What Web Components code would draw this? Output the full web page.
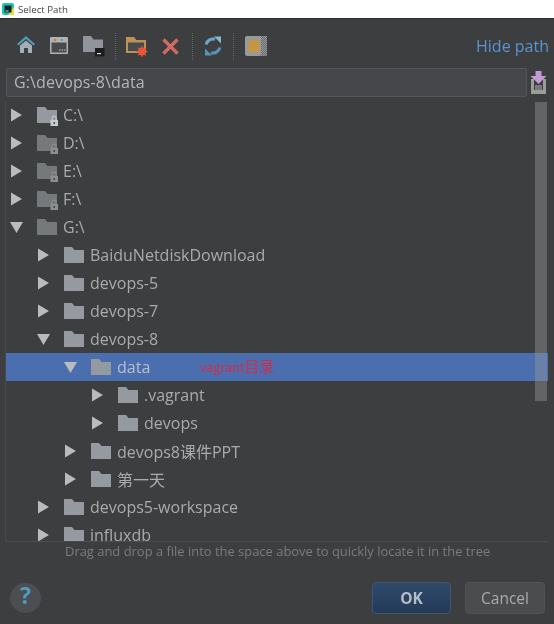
<!DOCTYPE html>
<html>
<head>
<meta charset="utf-8">
<title>Select Path</title>
<style>
  html, body { margin: 0; padding: 0; background: #3d3e40; }
  body { width: 554px; height: 624px; overflow: hidden; font-family: "Open Sans", "Noto Sans CJK SC", sans-serif; }
  .note { color: #d42a48; font-size: 14.6px; font-family: "Noto Sans CJK SC", sans-serif; line-height: 22px; }
  .note .small { font-size: 12.6px; }
</style>
</head>
<body>
<select-path-dialog>
  <title-bar slot="title">Select Path</title-bar>
  <tree-view slot="tree">
    <tree-row depth="0" kind="locked">C:\</tree-row>
    <tree-row depth="0" kind="locked-dim">D:\</tree-row>
    <tree-row depth="0" kind="locked-dim">E:\</tree-row>
    <tree-row depth="0" kind="locked-dim">F:\</tree-row>
    <tree-row depth="0" kind="folder-dim" open="true">G:\</tree-row>
    <tree-row depth="1">BaiduNetdiskDownload</tree-row>
    <tree-row depth="1">devops-5</tree-row>
    <tree-row depth="1">devops-7</tree-row>
    <tree-row depth="1" open="true">devops-8</tree-row>
    <tree-row depth="2" open="true" selected>data<span slot="note" class="note"><span class="small">vagrant</span>目录</span></tree-row>
    <tree-row depth="3">.vagrant</tree-row>
    <tree-row depth="3">devops</tree-row>
    <tree-row depth="2">devops8课件PPT</tree-row>
    <tree-row depth="2">第一天</tree-row>
    <tree-row depth="1">devops5-workspace</tree-row>
    <tree-row depth="1">influxdb</tree-row>
  </tree-view>
</select-path-dialog>

<script>
class TitleBar extends HTMLElement {
  constructor() {
    super();
    this.attachShadow({ mode: 'open' });
    this.shadowRoot.innerHTML = `
      <style>
        :host { display: flex; align-items: center; gap: 4px; height: 18px; background: #fff; padding-left: 2px;
                font: 500 9.7px "Open Sans", sans-serif; color: #444; border-bottom: 1px solid #2e2e2e; }
        svg { display: block; }
      </style>
      <svg width="12" height="12" viewBox="0 0 12 12">
        <rect width="12" height="12" rx="2" fill="#21c4a8"/>
        <path d="M6 12h6V4z" fill="#f0dc4a"/>
        <rect x="2.5" y="2.5" width="7" height="7" fill="#10232b"/>
        <rect x="3.5" y="7.5" width="3" height="1" fill="#ddd"/>
      </svg>
      <slot></slot>`;
  }
}

const TOOL_ICONS = {
  home: `<path d="M11 1 2 9l1.5 1.5L11 4l7.5 6.5L20 9z" fill="#4f9cb8"/><path d="M5 10.5 11 5.4l6 5.1V18h-4v-5H9v5H5z" fill="#a3aeb6"/>`,
  desktop: `<rect x="1" y="2" width="18" height="17" rx="1" fill="#aeb2b4"/><rect x="2.5" y="7.5" width="15" height="10" fill="#484b4e"/><rect x="5" y="4" width="2.2" height="2" rx="1" fill="#d8605c"/><rect x="8.4" y="4" width="2.2" height="2" rx="1" fill="#d8ae4a"/><rect x="11.8" y="4" width="2.2" height="2" rx="1" fill="#4f9cc4"/><rect x="10" y="14.5" width="1.5" height="1.2" fill="#aeb2b4"/><rect x="12.4" y="14.5" width="1.5" height="1.2" fill="#aeb2b4"/><rect x="14.8" y="14.5" width="1.5" height="1.2" fill="#aeb2b4"/>`,
  module: `<path d="M0 1h8l2.4 3.4H20V17H0z" fill="#8f959a"/><rect x="12" y="13" width="9.5" height="8.5" fill="#1b1d1e"/><rect x="14" y="18" width="4" height="1.2" fill="#ddd"/>`,
  newfolder: `<path d="M0 2h8l2.4 3H20v13H0z" fill="#bb9257"/><rect x="2" y="7.5" width="16" height="8.5" fill="#4a4a48"/><circle cx="16" cy="16.5" r="4" fill="#e8573b"/><path d="M16 11v11M10.5 16.5h11M12.1 12.6l7.8 7.8M19.9 12.6l-7.8 7.8" stroke="#e8573b" stroke-width="1.1"/>`,
  close: `<path d="M2.5 4.5 16.5 18.5M16.5 4.5 2.5 18.5" stroke="#cf6b62" stroke-width="3.4" fill="none"/>`,
  refresh: `<path d="M3.2 9.5A7 7 0 0 1 12 4.3" stroke="#6aa6cb" stroke-width="3.2" fill="none"/><path d="M16.8 12.5A7 7 0 0 1 8 17.7" stroke="#5595bd" stroke-width="3.2" fill="none"/><path d="M11 1.5h7v7z" fill="#8db7cd"/><path d="M9 20.500H2v-7z" fill="#5595bd"/>`,
  frame: `<rect x="13" y="1" width="9" height="20" fill="url(#check)"/><rect x="0" y="1" width="16" height="20" rx="2" fill="#979a9b"/><rect x="3.5" y="5" width="11" height="12" fill="#c79446"/><defs><pattern id="check" width="2" height="2" patternUnits="userSpaceOnUse"><rect width="2" height="2" fill="#68696b"/><rect width="1" height="1" fill="#96989a"/><rect x="1" y="1" width="1" height="1" fill="#96989a"/></pattern></defs>`
};

class ToolIcon extends HTMLElement {
  constructor() {
    super();
    this.attachShadow({ mode: 'open' });
  }

  connectedCallback() {
    this.shadowRoot.innerHTML = `
      <style>
        :host { display: block; flex: none; width: 22px; height: 22px; }
        svg { display: block; overflow: visible; }
      </style>
      <svg width="22" height="22" viewBox="0 0 22 22">${TOOL_ICONS[this.getAttribute('name')]}</svg>`;
  }
}

class ToolBar extends HTMLElement {
  constructor() {
    super();
    this.attachShadow({ mode: 'open' });
    this.shadowRoot.innerHTML = `
      <style>
        :host { display: flex; align-items: center; height: 42px; padding: 6px 5px 0 15px; }
        .sep { height: 27px; border-left: 1px dotted #666; }
        .hide { margin-left: auto; font-size: 16px; color: #5a93d3; }
      </style>
      <tool-icon name="home"></tool-icon>
      <tool-icon name="desktop" style="margin-left:12px"></tool-icon>
      <tool-icon name="module" style="margin-left:12px"></tool-icon>
      <span class="sep" style="margin:0 10px"></span>
      <tool-icon name="newfolder"></tool-icon>
      <tool-icon name="close" style="margin-left:13px"></tool-icon>
      <span class="sep" style="margin:0 10px 0 9px"></span>
      <tool-icon name="refresh"></tool-icon>
      <span class="sep" style="margin:0 11px 0 8px"></span>
      <tool-icon name="frame"></tool-icon>
      <span class="hide">Hide path</span>`;
  }
}

class PathField extends HTMLElement {
  constructor() {
    super();
    this.attachShadow({ mode: 'open' });
    this.shadowRoot.innerHTML = `
      <style>
        :host { display: flex; align-items: center; gap: 3px; padding: 0 7px 0 6px; height: 30px; }
        .input { flex: 1; height: 29px; box-sizing: border-box; background: #46474a; border: 1px solid #545658;
                 border-radius: 2px; padding-left: 7px; color: #b4b6b8; font-size: 16px; line-height: 27px; letter-spacing: .12px; }
        svg { display: block; }
      </style>
      <div class="input">G:\\devops-8\\data</div>
      <svg width="17" height="23" viewBox="0 0 17 23">
        <path d="M1 8h3v11h9V8h3v15H1z" fill="#9b9d98"/>
        <rect x="5" y="14" width="7" height="5" fill="#77797a"/>
        <path d="M5.5 0h6v5h5L8.500 13 .5 5h5z" fill="#c49ad0"/>
      </svg>`;
  }
}

const ROW_H = 28;

class TreeRow extends HTMLElement {
  constructor() {
    super();
    this.attachShadow({ mode: 'open' });
  }

  connectedCallback() {
    const depth = +this.getAttribute('depth') || 0;
    const open = this.getAttribute('open') === 'true';
    const kind = this.getAttribute('kind') || 'folder';
    const dim = kind.endsWith('dim');
    const locked = kind.startsWith('locked');
    const folderFill = dim ? '#76797c' : '#949a9f';
    const arrow = open
      ? `<path d="M0 2h13L6.5 13z" fill="#b9bbbd"/>`
      : `<path d="M1 .5 12 7 1 13.5z" fill="#b9bbbd"/>`;
    const lockFill = dim ? '#8c8f92' : '#c8cacc';
    const lock = locked
      ? `<rect x="13.5" y="14" width="7.5" height="6" fill="${lockFill}"/><path d="M15.2 14v-1.8a2 2 0 0 1 4 0V14" fill="none" stroke="${lockFill}" stroke-width="1.2"/><rect x="16.5" y="16" width="1.4" height="2" fill="#3d3e40"/>`
      : '';
    this.shadowRoot.innerHTML = `
      <style>
        :host { display: flex; align-items: center; position: relative; height: ${ROW_H}px; padding-left: ${4 + depth * 27}px;
                color: #a9abad; font-size: 16px; white-space: nowrap; }
        :host([selected]) { background: #4b6eaf; color: #b7bfcc; }
        .arrow { width: 13px; height: 14px; display: block; flex: none; }
        .folder { width: 21px; height: 18px; display: block; flex: none; margin: 0 5px 0 14px; overflow: visible; }
        ::slotted(.note) { position: absolute; left: 194px; top: 2px; }
      </style>
      <svg class="arrow" viewBox="0 0 13 14">${arrow}</svg>
      <svg class="folder" viewBox="0 0 21 18"><path d="M0 1h8l2.5 3H20v13H0z" fill="${folderFill}"/>${lock}</svg>
      <slot></slot><slot name="note"></slot>`;
  }
}

class TreeView extends HTMLElement {
  constructor() {
    super();
    this.attachShadow({ mode: 'open' });
    this.shadowRoot.innerHTML = `
      <style>
        :host { display: block; position: relative; height: 441px; margin: 4px 6px 0 5px; overflow: hidden;
                box-sizing: border-box; border-bottom: 1px solid #4a4c4e; border-left: 1px solid #47494b; }
        .thumb { position: absolute; right: 1px; top: 1px; width: 12px; height: 299px; background: rgba(150,152,154,.42); }
      </style>
      <slot></slot>
      <div class="thumb"></div>`;
  }
}

class DialogFooter extends HTMLElement {
  constructor() {
    super();
    this.attachShadow({ mode: 'open' });
    this.shadowRoot.innerHTML = `
      <style>
        :host { display: block; color: #7a7c7e; }
        .hint { font-size: 12.95px; padding-left: 65px; height: 24px; line-height: 18px; white-space: nowrap; }
        .bar { display: flex; align-items: center; padding: 16px 9px 0 10px; gap: 14px; }
        .help { width: 31px; height: 30px; border-radius: 50%; background: #4c4f52; color: #4f9cc4; font: bold 23px/25px "Open Sans", sans-serif;
                text-align: center; margin-right: auto; }
        button { height: 32px; border-radius: 4px; font: 15.5px "Open Sans", sans-serif; padding: 0; }
        .ok { width: 79px; background: linear-gradient(#2f4a6c, #243a57); border: 1px solid #3f5570; color: #b4bdc8; font-weight: bold; }
        .cancel { width: 80px; background: #4a4c4e; border: 1px solid #505254; color: #a9abad; }
      </style>
      <div class="hint">Drag and drop a file into the space above to quickly locate it in the tree</div>
      <div class="bar">
        <div class="help">?</div>
        <button class="ok">OK</button>
        <button class="cancel">Cancel</button>
      </div>`;
  }
}

class SelectPathDialog extends HTMLElement {
  constructor() {
    super();
    this.attachShadow({ mode: 'open' });
    this.shadowRoot.innerHTML = `
      <style>
        :host { display: block; width: 554px; height: 624px; background: #3d3e40; filter: blur(0.4px); }
      </style>
      <slot name="title"></slot>
      <tool-bar></tool-bar>
      <path-field></path-field>
      <slot name="tree"></slot>
      <dialog-footer></dialog-footer>`;
  }
}

customElements.define('title-bar', TitleBar);
customElements.define('tool-icon', ToolIcon);
customElements.define('tool-bar', ToolBar);
customElements.define('path-field', PathField);
customElements.define('tree-row', TreeRow);
customElements.define('tree-view', TreeView);
customElements.define('dialog-footer', DialogFooter);
customElements.define('select-path-dialog', SelectPathDialog);
</script>
</body>
</html>
